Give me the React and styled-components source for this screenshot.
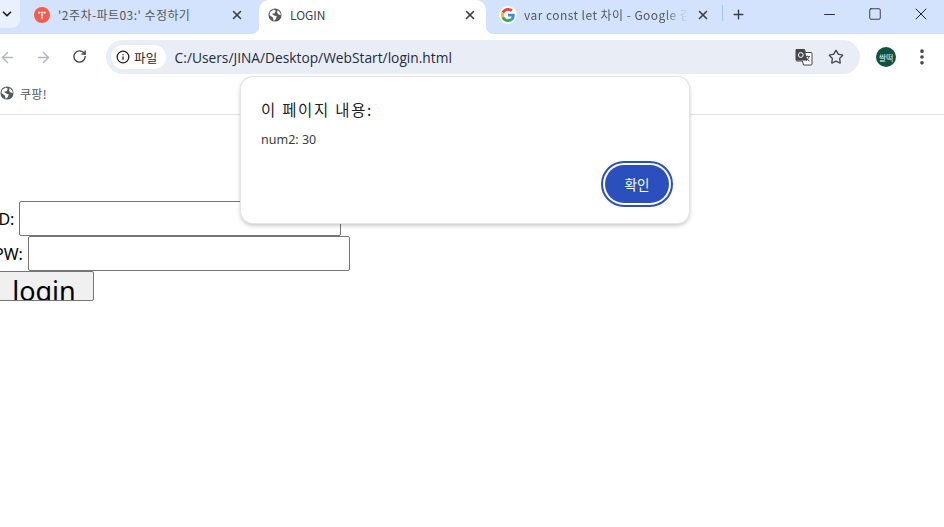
import React from "react";
import styled, { createGlobalStyle } from "styled-components";
import { ArrowLeft, ArrowRight, RotateCw, Star, X, Plus, Minus, Square, ChevronDown, Info, MoreVertical } from "lucide-react";

const GlobalStyle = createGlobalStyle`
  html, body {
    margin: 0;
    padding: 0;
    background: #fff;
    overflow: hidden;
  }
  body {
    width: 944px;
    height: 527px;
    font-family: "Noto Sans CJK KR", "Noto Sans", sans-serif;
  }
`;

const Window = styled.div`
  position: relative;
  width: 944px;
  height: 527px;
  overflow: hidden;
  background: #fff;
  display: flex;
  flex-direction: column;
`;

const TabStrip = styled.div`
  height: 34px;
  background: #d3e3fd;
  display: flex;
  align-items: flex-end;
  flex-shrink: 0;
`;

const TabSearch = styled.div`
  width: 20px;
  height: 28px;
  margin-right: 8px;
  align-self: flex-start;
  display: flex;
  align-items: center;
  justify-content: flex-end;
  padding-right: 6px;
  box-sizing: border-box;
  background: #e9f0fe;
  border-radius: 0 0 8px 0;
  color: #1f1f1f;
`;

const Tab = styled.div`
  position: relative;
  width: ${(p) => p.$width}px;
  height: 34px;
  box-sizing: border-box;
  padding: 0 ${(p) => p.$right}px 4px ${(p) => p.$left}px;
  display: flex;
  align-items: center;
  gap: 8px;
  border-radius: 10px 10px 0 0;
  background: ${(p) => (p.$active ? "#fff" : "transparent")};
  flex-shrink: 0;

  ${(p) =>
    p.$active &&
    `
    &::before, &::after {
      content: "";
      position: absolute;
      bottom: 0;
      width: 8px;
      height: 8px;
    }
    &::before {
      left: -8px;
      background: radial-gradient(circle at 0 0, transparent 8px, #fff 8.5px);
    }
    &::after {
      right: -8px;
      background: radial-gradient(circle at 100% 0, transparent 8px, #fff 8.5px);
    }
  `}
`;

const TabTitle = styled.span`
  flex: 1;
  min-width: 0;
  overflow: hidden;
  white-space: nowrap;
  font-size: 12px;
  line-height: 16px;
  letter-spacing: ${(p) => (p.$active ? "0" : "0.45px")};
  color: ${(p) => (p.$active ? "#3f4043" : "#55585c")};
  font-family: "Noto Sans CJK KR", sans-serif;
  ${(p) =>
    p.$fade &&
    `
    mask-image: linear-gradient(to right, #000 calc(100% - 24px), transparent);
  `}
`;

const TabClose = styled.span`
  display: flex;
  color: #3c3d40;
  flex-shrink: 0;
`;

const TabDivider = styled.div`
  width: 1px;
  height: 16px;
  margin: 0 8px 13px 0;
  background: #a8c3f2;
  flex-shrink: 0;
`;

const NewTab = styled.div`
  width: 16px;
  height: 34px;
  padding-bottom: 5px;
  box-sizing: border-box;
  display: flex;
  align-items: center;
  color: #3c3d40;
  flex-shrink: 0;
`;

const WindowControls = styled.div`
  margin-left: auto;
  height: 34px;
  padding-bottom: 6px;
  box-sizing: border-box;
  display: flex;
  align-items: center;
  color: #1f1f1f;
`;

const ControlButton = styled.div`
  width: 46px;
  height: 28px;
  display: flex;
  align-items: center;
  justify-content: center;
`;

const Toolbar = styled.div`
  height: 46px;
  display: flex;
  align-items: center;
  flex-shrink: 0;
`;

const NavButton = styled.div`
  width: 35px;
  margin-left: ${(p) => p.$shift || 0}px;
  display: flex;
  justify-content: center;
  color: ${(p) => (p.$disabled ? "#b5b7ba" : "#46474a")};
`;

const NavRow = styled.div`
  display: flex;
  margin-left: -10px;
  margin-right: 9px;
`;

const Omnibox = styled.div`
  width: 754px;
  height: 34px;
  box-sizing: border-box;
  border-radius: 17px;
  background: #e9edf6;
  display: flex;
  align-items: center;
  padding: 0 16px 0 5px;
`;

const SiteChip = styled.div`
  height: 24px;
  box-sizing: border-box;
  padding: 0 8px 0 5px;
  border-radius: 12px;
  background: #fff;
  display: flex;
  align-items: center;
  gap: 4px;
  font-size: 12.5px;
  letter-spacing: 0.3px;
  color: #1f1f1f;
`;

const UrlText = styled.span`
  margin-left: 9px;
  flex: 1;
  font-family: "Open Sans", "Noto Sans", sans-serif;
  font-size: 13.75px;
  color: #1f2a44;
`;

const OmniIcons = styled.div`
  display: flex;
  align-items: center;
  gap: 15px;
  color: #46474a;
`;

const Avatar = styled.div`
  width: 20px;
  height: 20px;
  border-radius: 50%;
  margin-left: 16px;
  background: #0f5242;
  color: #e8f2ee;
  font-size: 8px;
  display: flex;
  align-items: center;
  justify-content: center;
`;

const MenuButton = styled.div`
  margin-left: 16px;
  display: flex;
  color: #46474a;
`;

const BookmarkBar = styled.div`
  height: 35px;
  box-sizing: border-box;
  border-bottom: 1px solid #e1e3e6;
  display: flex;
  align-items: center;
  gap: 6px;
  padding: 0 0 8px 0;
  font-size: 12px;
  letter-spacing: 0.3px;
  color: #55585c;
  flex-shrink: 0;
`;

const Page = styled.div`
  padding-top: 86px;
  margin-left: -10px;
  font-family: "Liberation Serif", serif;
  font-size: 16px;
  color: #000;
`;

const FormRow = styled.div`
  height: 35px;
  display: flex;
  align-items: center;
  gap: ${(p) => p.$gap}px;
  margin-left: ${(p) => p.$offset}px;
  font-family: "Noto Sans", sans-serif;
  font-size: 16px;
`;

const TextBox = styled.div`
  width: 322px;
  height: 35px;
  box-sizing: border-box;
  background: #fff;
  border: 1px solid #767676;
  border-radius: 2px;
`;

const LoginButton = styled.div`
  width: 104px;
  height: 30px;
  box-sizing: border-box;
  padding-left: 4px;
  background: #f0f0f0;
  border: 1px solid #767676;
  border-radius: 2px;
  overflow: hidden;
  text-align: center;
  font-family: "Noto Sans", sans-serif;
  font-size: 27px;
  line-height: 37px;
`;

const Dialog = styled.div`
  position: absolute;
  left: 241px;
  top: 77px;
  width: 448px;
  height: 146px;
  box-sizing: border-box;
  background: #fff;
  border-radius: 12px;
  box-shadow: 0 0 0 1px #e4e4e4, 0 2px 5px rgba(0, 0, 0, 0.28);
  padding: 21px 18px 18px 20px;
  display: flex;
  flex-direction: column;
`;

const DialogTitle = styled.div`
  font-size: 15.5px;
  line-height: 22px;
  letter-spacing: 1.7px;
  color: #1f1f1f;
`;

const DialogMessage = styled.div`
  margin-top: 12px;
  font-family: "Noto Sans", sans-serif;
  font-size: 12.5px;
  line-height: 16px;
  color: #3c3d40;
`;

const DialogActions = styled.div`
  margin-top: auto;
  display: flex;
  justify-content: flex-end;
`;

const OkButton = styled.button`
  width: 64px;
  height: 38px;
  margin: 0 2px 2px 0;
  border: 0;
  border-radius: 19px;
  background: #2b4fbd;
  color: #fff;
  font-family: inherit;
  font-size: 13.5px;
  outline: 2px solid #2b4fbd;
  outline-offset: 2px;
  padding: 0;
`;

const GlobeIcon = ({ size = 14 }) => (
  <svg width={size} height={size} viewBox="0 0 16 16">
    <circle cx="8" cy="8" r="7.5" fill="#55585c" />
    <path d="M2.6 4.2 6.5 1.8 9 3 7.5 6 4.5 6.5 7 8.6 10 9.4 9 12.5 6.6 14.8 5.5 10.8 1.6 8z" fill="#fff" />
    <path d="M11 2.4 13.8 5 14.8 8.4 12.2 7.4 10.4 5.4z" fill="#fff" />
  </svg>
);

const TistoryIcon = () => (
  <svg width="16" height="16" viewBox="0 0 16 16">
    <circle cx="8" cy="8" r="8" fill="#f25c4d" />
    <path d="M4.3 5.6h7.4M8 7.2v4.3" stroke="#fff" strokeWidth="1.9" strokeDasharray="2 0.6" fill="none" />
  </svg>
);

const GoogleBadge = styled.span`
  width: 18px;
  height: 18px;
  margin: 0 -1px;
  border-radius: 50%;
  background: #fff;
  display: flex;
  align-items: center;
  justify-content: center;
  flex-shrink: 0;
`;

const GoogleIcon = () => (
  <GoogleBadge>
    <svg width="14" height="14" viewBox="0 0 48 48">
      <path fill="#EA4335" d="M24 9.5c3.54 0 6.71 1.22 9.21 3.6l6.85-6.85C35.9 2.38 30.47 0 24 0 14.62 0 6.51 5.38 2.56 13.22l7.98 6.19C12.43 13.72 17.74 9.5 24 9.5z" />
      <path fill="#4285F4" d="M46.98 24.55c0-1.57-.15-3.09-.38-4.55H24v9.02h12.94c-.58 2.96-2.26 5.48-4.78 7.18l7.73 6c4.51-4.18 7.09-10.36 7.09-17.65z" />
      <path fill="#FBBC05" d="M10.53 28.59c-.48-1.45-.76-2.99-.76-4.59s.27-3.14.76-4.59l-7.98-6.19C.92 16.46 0 20.12 0 24c0 3.88.92 7.54 2.56 10.78l7.97-6.19z" />
      <path fill="#34A853" d="M24 48c6.48 0 11.93-2.13 15.89-5.81l-7.73-6c-2.15 1.45-4.92 2.3-8.16 2.3-6.26 0-11.57-4.22-13.47-9.91l-7.98 6.19C6.51 42.62 14.62 48 24 48z" />
    </svg>
  </GoogleBadge>
);

const TranslateIcon = () => (
  <svg width="18" height="18" viewBox="0 0 18 18">
    <path d="M1 1.5h8.5l1 3H16a1 1 0 0 1 1 1V16a1 1 0 0 1-1 1H8.5l-1-4H2a1 1 0 0 1-1-1z" fill="#fff" stroke="#46474a" strokeWidth="1" />
    <path d="M1 2a1 1 0 0 1 1-1h7.4l3 11.5H2a1 1 0 0 1-1-1z" fill="#46474a" />
    <circle cx="5.8" cy="7" r="2.4" fill="none" stroke="#fff" strokeWidth="1" />
    <path d="M10.5 8.5h4.5M12.7 7.5v1M14 8.5c-.6 2.5-2 3.8-3 4.5M11.5 10c.6 1.4 1.8 2.4 3 3" fill="none" stroke="#46474a" strokeWidth="0.9" />
  </svg>
);

const App = () => {
  return (
    <Window>
      <GlobalStyle />
      <TabStrip>
        <TabSearch>
          <ChevronDown size={14} strokeWidth={3} />
        </TabSearch>
        <Tab $width={231} $left={6} $right={15}>
          <TistoryIcon />
          <TabTitle>'2주차-파트03:' 수정하기</TabTitle>
          <TabClose>
            <X size={14} strokeWidth={2.6} />
          </TabClose>
        </Tab>
        <Tab $active $width={227} $left={9} $right={9}>
          <GlobeIcon />
          <TabTitle $active>LOGIN</TabTitle>
          <TabClose>
            <X size={14} strokeWidth={2.6} />
          </TabClose>
        </Tab>
        <Tab $width={236} $left={14} $right={12}>
          <GoogleIcon />
          <TabTitle $fade>var const let 차이 - Google 검색</TabTitle>
          <TabClose>
            <X size={14} strokeWidth={2.6} />
          </TabClose>
        </Tab>
        <TabDivider />
        <NewTab>
          <Plus size={15} strokeWidth={2.2} />
        </NewTab>
        <WindowControls>
          <ControlButton>
            <Minus size={17} strokeWidth={1.3} />
          </ControlButton>
          <ControlButton>
            <Square size={14} strokeWidth={1.4} />
          </ControlButton>
          <ControlButton>
            <X size={20} strokeWidth={1.2} />
          </ControlButton>
        </WindowControls>
      </TabStrip>
      <Toolbar>
        <NavRow>
          <NavButton $disabled>
            <ArrowLeft size={17} strokeWidth={2} />
          </NavButton>
          <NavButton $disabled $shift={1}>
            <ArrowRight size={17} strokeWidth={2} />
          </NavButton>
          <NavButton $shift={1}>
            <RotateCw size={15} strokeWidth={2.2} />
          </NavButton>
        </NavRow>
        <Omnibox>
          <SiteChip>
            <Info size={14} strokeWidth={2.2} />
            파일
          </SiteChip>
          <UrlText>C:/Users/JINA/Desktop/WebStart/login.html</UrlText>
          <OmniIcons>
            <TranslateIcon />
            <Star size={16} strokeWidth={2} />
          </OmniIcons>
        </Omnibox>
        <Avatar>쌀떡</Avatar>
        <MenuButton>
          <MoreVertical size={20} strokeWidth={2.4} />
        </MenuButton>
      </Toolbar>
      <BookmarkBar>
        <GlobeIcon />
        쿠팡!
      </BookmarkBar>
      <Page>
        <FormRow $offset={3} $gap={5}>
          ID:
          <TextBox />
        </FormRow>
        <FormRow $offset={4} $gap={5}>
          PW:
          <TextBox />
        </FormRow>
        <LoginButton>login</LoginButton>
      </Page>
      <Dialog>
        <DialogTitle>이 페이지 내용:</DialogTitle>
        <DialogMessage>num2: 30</DialogMessage>
        <DialogActions>
          <OkButton>확인</OkButton>
        </DialogActions>
      </Dialog>
    </Window>
  );
};

export default App;
